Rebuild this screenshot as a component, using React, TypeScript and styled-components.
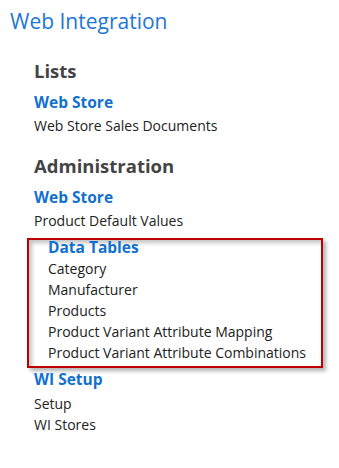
import React from "react";
import styled, { createGlobalStyle } from "styled-components";

const Global = createGlobalStyle`
  html, body { margin: 0; padding: 0; background: #ffffff; }
  body { font-family: "Open Sans", "Noto Sans", "Liberation Sans", sans-serif; }
`;

const Page = styled.div`
  display: flex;
  flex-direction: column;
  padding: 6px 0 0 10px;
`;

const Title = styled.h1`
  margin: 0;
  font-size: 21px;
  line-height: 30px;
  font-weight: 400;
  color: #1e77d3;
`;

const Content = styled.div`
  display: flex;
  flex-direction: column;
  padding-left: 24px;
`;

const SectionHeading = styled.h2<{ $top: number }>`
  margin: ${(p) => p.$top}px 0 0 0;
  font-size: 18.5px;
  line-height: 24px;
  font-weight: 700;
  color: #444444;
`;

const GroupHeading = styled.div<{ $top?: number; $lh?: number }>`
  margin-top: ${(p) => p.$top ?? 0}px;
  font-size: 15.5px;
  line-height: ${(p) => p.$lh ?? 21}px;
  font-weight: 700;
  color: #1170d0;
`;

const Item = styled.div<{ $top?: number }>`
  margin-top: ${(p) => p.$top ?? 0}px;
  font-size: 14px;
  line-height: 21px;
  color: #222222;
`;

const Highlight = styled.div`
  display: flex;
  flex-direction: column;
  margin: 7px 0 0 -7px;
  width: 296px;
  box-sizing: border-box;
  padding: 0 0 3px 19px;
  border: 2px solid #c00000;
  box-shadow: 3px 3px 4px rgba(0, 0, 0, 0.3), inset 3px 3px 4px rgba(0, 0, 0, 0.24);
`;

export default function App() {
  return (
    <>
      <Global />
      <Page>
        <Title>Web Integration</Title>
        <Content>
          <SectionHeading $top={23}>Lists</SectionHeading>
          <GroupHeading $top={9}>Web Store</GroupHeading>
          <Item $top={2}>Web Store Sales Documents</Item>

          <SectionHeading $top={18}>Administration</SectionHeading>
          <GroupHeading $top={9}>Web Store</GroupHeading>
          <Item $top={2}>Product Default Values</Item>

          <Highlight>
            <GroupHeading $lh={14}>Data Tables</GroupHeading>
            <Item $top={4}>Category</Item>
            <Item>Manufacturer</Item>
            <Item>Products</Item>
            <Item>Product Variant Attribute Mapping</Item>
            <Item>Product Variant Attribute Combinations</Item>
          </Highlight>

          <GroupHeading $top={1}>WI Setup</GroupHeading>
          <Item $top={3}>Setup</Item>
          <Item>WI Stores</Item>
        </Content>
      </Page>
    </>
  );
}
